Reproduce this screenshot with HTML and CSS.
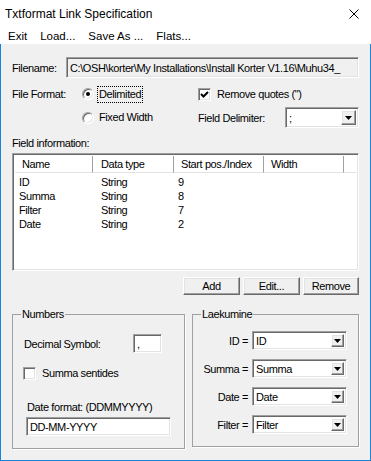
FILE: index.html
```html
<!DOCTYPE html>
<html lang="en">
<head>
  <meta charset="UTF-8" />
  <meta name="viewport" content="width=device-width, initial-scale=1.0" />
  <title>Txtformat Link Specification</title>
  <link rel="stylesheet" href="styles.css">
</head>
<body>
  <div class="window">
    <div class="titlebar">
      <span>Txtformat Link Specification</span>
      <svg class="close" width="10" height="10" viewBox="0 0 10 10">
        <path d="M0.5 0.5 L9.5 9.5 M9.5 0.5 L0.5 9.5" stroke="#000" stroke-width="1" fill="none" />
      </svg>
    </div>
    <div class="menubar">
      <span>Exit</span>
      <span>Load...</span>
      <span>Save As ...</span>
      <span>Flats...</span>
    </div>

    <div class="client">
      <div class="filename-row">
        <span class="filename-label">Filename:</span>
        <div class="edit disabled">C:\OSH\korter\My Installations\Install Korter V1.16\Muhu34_</div>
      </div>

      <div class="format">
        <span>File Format:</span>
        <div class="option">
          <span class="radio"><span class="dot"></span></span>
          <span class="option-text focused">Delimited</span>
        </div>
        <div class="option check-span">
          <span class="checkbox">
            <svg width="9" height="9" viewBox="0 0 9 9"><path d="M1 4 L3.5 6.5 L8 2" stroke="#000" stroke-width="2" fill="none" /></svg>
          </span>
          <span class="check-text">Remove quotes (")</span>
        </div>

        <span></span>
        <div class="option">
          <span class="radio"></span>
          <span class="option-text">Fixed Width</span>
        </div>
        <span>Field Delimiter:</span>
        <div class="combo delim">
          <span class="combo-text">;</span>
          <span class="combo-btn"><svg width="7" height="4" viewBox="0 0 7 4"><polygon points="0,0 7,0 3.5,4" fill="#000" /></svg></span>
        </div>
      </div>

      <div class="field-info">Field information:</div>
      <div class="listview">
        <div class="lv-header">
          <span>Name</span>
          <span>Data type</span>
          <span>Start pos./Index</span>
          <span>Width</span>
          <span></span>
        </div>
        <div class="lv-rows">
          <div class="lv-row"><span>ID</span><span>String</span><span>9</span></div>
          <div class="lv-row"><span>Summa</span><span>String</span><span>8</span></div>
          <div class="lv-row"><span>Filter</span><span>String</span><span>7</span></div>
          <div class="lv-row"><span>Date</span><span>String</span><span>2</span></div>
        </div>
      </div>

      <div class="buttons">
        <button class="btn btn-add">Add</button>
        <button class="btn btn-edit">Edit...</button>
        <button class="btn btn-remove">Remove</button>
      </div>

      <div class="groups">
        <fieldset class="group numbers">
          <legend>Numbers</legend>
          <div class="decimal-row">
            <span>Decimal Symbol:</span>
            <div class="edit decimal">,</div>
          </div>
          <div class="summa-row">
            <span class="checkbox"></span>
            <span class="check-text">Summa sentides</span>
          </div>
          <div class="date-label">Date format: (DDMMYYYY)</div>
          <div class="edit date-edit">DD-MM-YYYY</div>
        </fieldset>

        <fieldset class="group laekumine">
          <legend>Laekumine</legend>
          <div class="map-grid">
            <span class="map-label">ID =</span>
            <div class="combo small">
              <span class="combo-text">ID</span>
              <span class="combo-btn"><svg width="7" height="4" viewBox="0 0 7 4"><polygon points="0,0 7,0 3.5,4" fill="#000" /></svg></span>
            </div>
            <span class="map-label">Summa =</span>
            <div class="combo small">
              <span class="combo-text">Summa</span>
              <span class="combo-btn"><svg width="7" height="4" viewBox="0 0 7 4"><polygon points="0,0 7,0 3.5,4" fill="#000" /></svg></span>
            </div>
            <span class="map-label">Date =</span>
            <div class="combo small">
              <span class="combo-text">Date</span>
              <span class="combo-btn"><svg width="7" height="4" viewBox="0 0 7 4"><polygon points="0,0 7,0 3.5,4" fill="#000" /></svg></span>
            </div>
            <span class="map-label">Filter =</span>
            <div class="combo small">
              <span class="combo-text">Filter</span>
              <span class="combo-btn"><svg width="7" height="4" viewBox="0 0 7 4"><polygon points="0,0 7,0 3.5,4" fill="#000" /></svg></span>
            </div>
          </div>
        </fieldset>
      </div>
    </div>
  </div>
</body>
</html>
```

FILE: styles.css
```css
* {
  box-sizing: border-box;
}
body {
  margin: 0;
  background: #fff;
  font-family: "Liberation Sans", Arial, sans-serif;
  color: #000;
}
.window {
  width: 371px;
  height: 461px;
  display: flex;
  flex-direction: column;
  background: #fff;
}
.titlebar {
  height: 27px;
  display: flex;
  align-items: center;
  justify-content: space-between;
  padding: 0 12px 0 5px;
  font-size: 12px;
}
.menubar {
  height: 17px;
  display: flex;
  align-items: center;
  gap: 13px;
  padding-left: 8px;
  font-size: 11.5px;
}
.client {
  flex: 1;
  background: #f0f0f0;
  border: 1px solid #1883d7;
  border-top: none;
  padding: 13px 11px 0;
  font-size: 11px;
  letter-spacing: -0.4px;
}

/* sunken / raised edges */
.edit,
.combo,
.listview,
.radio,
.checkbox {
  border: 1px solid;
  border-color: #a0a0a0 #fff #fff #a0a0a0;
  box-shadow: inset 1px 1px 0 #696969, inset -1px -1px 0 #e3e3e3;
  background: #fff;
}
.btn,
.combo-btn {
  border: 1px solid;
  border-color: #fff #696969 #696969 #fff;
  box-shadow: inset -1px -1px 0 #a0a0a0, inset 1px 1px 0 #e3e3e3;
  background: #f0f0f0;
}

.edit {
  display: flex;
  align-items: center;
  padding-left: 3px;
  white-space: nowrap;
  overflow: hidden;
}
.edit.disabled {
  background: #f0f0f0;
}

.filename-row {
  display: flex;
  align-items: center;
  height: 21px;
}
.filename-label {
  width: 54px;
}
.filename-row .edit {
  width: 293px;
  height: 21px;
}

.format {
  display: grid;
  grid-template-columns: 70px 116px 87px 74px;
  grid-template-rows: 20px 21px;
  row-gap: 3px;
  align-items: center;
  margin-top: 6px;
}
.option {
  display: flex;
  align-items: center;
}
.check-span {
  grid-column: span 2;
}
.radio {
  width: 12px;
  height: 12px;
  border-radius: 50%;
  display: flex;
  align-items: center;
  justify-content: center;
}
.dot {
  width: 4px;
  height: 4px;
  border-radius: 50%;
  background: #000;
}
.option-text {
  margin-left: 4px;
  padding: 1px 1px;
  line-height: 13px;
}
.option-text.focused {
  outline: 1px dotted #000;
}
.checkbox {
  width: 13px;
  height: 13px;
  display: flex;
  align-items: center;
  justify-content: center;
}
.check-text {
  margin-left: 6px;
}

.combo {
  display: flex;
  padding: 2px;
}
.combo-text {
  flex: 1;
  display: flex;
  align-items: center;
  padding-left: 1px;
}
.combo-btn {
  width: 15px;
  display: flex;
  align-items: center;
  justify-content: center;
}
.combo.delim {
  height: 21px;
}
.combo.small {
  width: 95px;
  height: 19px;
}
.combo.small .combo-btn {
  width: 13px;
}

.field-info {
  margin-top: 9px;
  line-height: 12px;
}
.listview {
  margin-top: 4px;
  height: 118px;
  padding: 2px;
}
.lv-header,
.lv-row {
  display: grid;
  grid-template-columns: 78px 81px 90px 80px 1fr;
}
.lv-header {
  height: 17px;
}
.lv-header span {
  display: flex;
  align-items: center;
  padding-left: 7px;
  border-right: 1px solid #a0a0a0;
  border-bottom: 1px solid #e3e3e3;
}
.lv-header span:nth-child(2) {
  padding-left: 8px;
}
.lv-header span:last-child {
  border-right: none;
}
.lv-rows {
  padding-top: 2px;
}
.lv-row {
  line-height: 14px;
}
.lv-row span:nth-child(1) {
  padding-left: 4px;
}
.lv-row span:nth-child(2) {
  padding-left: 8px;
}
.lv-row span:nth-child(3) {
  padding-left: 4px;
}

.buttons {
  display: flex;
  justify-content: flex-end;
  gap: 3px;
  margin-top: 6px;
}
.btn {
  height: 18px;
  padding: 0;
  font-family: inherit;
  font-size: 11px;
  letter-spacing: -0.4px;
  color: #000;
}
.btn-add,
.btn-edit {
  width: 57px;
}
.btn-remove {
  width: 56px;
}

.groups {
  display: flex;
  gap: 7px;
  margin-top: 13px;
}
.group {
  margin: 0;
  height: 141px;
  border: 1px solid #a0a0a0;
  box-shadow: 1px 1px 0 #fff;
}
.group legend {
  padding: 0 1px;
  line-height: 12px;
}
.numbers {
  width: 173px;
  padding: 14px 10px 0 10px;
}
.numbers legend {
  margin-left: -2px;
}
.laekumine {
  width: 167px;
  height: 139px;
  padding: 11px 0 0 7px;
}
.laekumine legend {
  margin-left: 1px;
}
.decimal-row {
  display: flex;
  align-items: center;
  justify-content: space-between;
  height: 19px;
  padding-left: 1px;
  padding-right: 12px;
}
.edit.decimal {
  width: 29px;
  height: 19px;
}
.summa-row {
  display: flex;
  align-items: center;
  margin-top: 13px;
  height: 14px;
}
.date-label {
  margin-top: 21px;
  margin-left: 4px;
  line-height: 12px;
}
.edit.date-edit {
  margin-top: 4px;
  margin-left: 3px;
  width: 145px;
  height: 19px;
}
.map-grid {
  display: grid;
  grid-template-columns: 48px 95px;
  column-gap: 4px;
  row-gap: 9px;
  align-items: center;
}
.map-label {
  text-align: right;
}
```
